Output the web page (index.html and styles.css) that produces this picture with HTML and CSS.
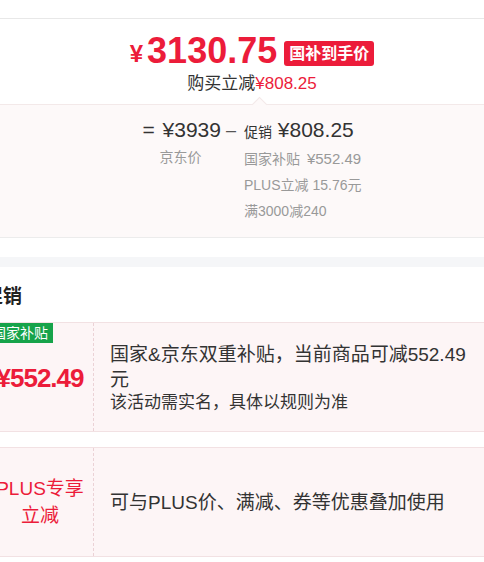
FILE: index.html
```html
<!DOCTYPE html>
<html lang="zh-CN">

<head>
    <meta charset="UTF-8" />
    <meta name="viewport" content="width=device-width, initial-scale=1" />
    <title>价格详情</title>
    <link rel="stylesheet" href="styles.css">
</head>

<body>
    <div class="page">

        <!-- 顶部分隔 -->
        <div class="top-strip"></div>

        <!-- 到手价 -->
        <div class="price-head">
            <div class="final-price">
                <span class="yen">¥</span><span class="num">3130.75</span>
                <span class="price-tag">国补到手价</span>
            </div>
            <div class="save">购买立减<span class="red">¥808.25</span></div>
        </div>

        <!-- 价格计算 -->
        <div class="calc">
            <div class="calc-inner">
                <div class="calc-col">
                    <div class="calc-line"><span class="op">=</span> ¥3939</div>
                    <div class="calc-sub jd-label">京东价</div>
                </div>
                <div class="calc-minus">–</div>
                <div class="calc-col">
                    <div class="calc-line"><span class="small">促销</span> ¥808.25</div>
                    <div class="calc-sub">国家补贴 <span class="sub-num">¥552.49</span></div>
                    <div class="calc-sub">PLUS立减 15.76元</div>
                    <div class="calc-sub">满3000减240</div>
                </div>
            </div>
        </div>

        <div class="gray-band"></div>

        <!-- 促销 -->
        <div class="promo-title">促销</div>

        <div class="promo-row">
            <div class="promo-left">
                <span class="green-tag">国家补贴</span>
                <div class="promo-amount">¥552.49</div>
            </div>
            <div class="promo-right">
                <div class="desc">国家&amp;京东双重补贴，当前商品可减552.49元</div>
                <div class="desc-sub">该活动需实名，具体以规则为准</div>
            </div>
        </div>

        <div class="promo-row">
            <div class="promo-left">
                <div class="promo-name">PLUS专享<br>立减</div>
            </div>
            <div class="promo-right">
                <div class="desc">可与PLUS价、满减、券等优惠叠加使用</div>
            </div>
        </div>

    </div>
</body>

</html>
```

FILE: styles.css
```css
body {
    margin: 0;
    background-color: #fff;
    color: #333;
    font-family: "Liberation Sans", "Noto Sans CJK SC", sans-serif;
    overflow: hidden;
}

.page {
    width: 536px;
    margin-left: -16px;
}

.top-strip {
    height: 18px;
    border-bottom: 1px solid #e8e8e8;
}

/* —— 到手价 —— */
.price-head {
    padding: 12px 0 9px;
    text-align: center;
}

.final-price {
    height: 40px;
    display: flex;
    justify-content: center;
    align-items: center;
    color: #ec1c3a;
    font-weight: bold;
}

.yen {
    font-size: 24px;
    margin-top: 6px;
    margin-right: 4px;
}

.num {
    font-size: 36px;
}

.price-tag {
    margin-left: 7px;
    margin-top: 4px;
    background-color: #ec1c3a;
    color: #fff;
    font-size: 16px;
    font-weight: bold;
    line-height: 25px;
    padding: 0 5px;
    border-radius: 3px;
}

.save {
    margin-top: 2px;
    line-height: 22px;
    font-size: 17px;
    color: #333;
}

.red {
    color: #ec1c3a;
}

/* —— 价格计算 —— */
.calc {
    position: relative;
    background-color: #fdf9f9;
    border-top: 1px solid #f3e9e9;
    border-bottom: 1px solid #ececec;
    padding: 11px 0 13px;
}

.calc::before {
    content: "";
    position: absolute;
    top: -6px;
    left: 270px;
    width: 10px;
    height: 10px;
    background-color: #fdf9f9;
    border-top: 1px solid #f3e9e9;
    border-left: 1px solid #f3e9e9;
    transform: rotate(45deg);
}

.calc-inner {
    display: flex;
    justify-content: center;
}

.calc-line {
    font-size: 21px;
    line-height: 28px;
    color: #333;
}

.op {
    margin-right: 2px;
}

.small {
    font-size: 14px;
}

.calc-minus {
    font-size: 18px;
    line-height: 28px;
    margin: 0 8px 0 5px;
    color: #555;
}

.calc-sub {
    font-size: 14px;
    line-height: 26px;
    color: #999;
}

.sub-num {
    margin-left: 3px;
    font-size: 15px;
}

.jd-label {
    padding-left: 17px;
}

.gray-band {
    height: 10px;
    margin-top: 19px;
    background-color: #f5f6f8;
}

/* —— 促销 —— */
.promo-title {
    font-size: 19px;
    font-weight: bold;
    line-height: 26px;
    padding: 17px 0 12px;
    color: #222;
}

.promo-row {
    display: flex;
    min-height: 108px;
    margin-left: 3px;
    margin-bottom: 15px;
    background-color: #fdf5f6;
    border-top: 1px solid #f2e1e3;
    border-bottom: 1px solid #f2e1e3;
}

.promo-left {
    position: relative;
    width: 106px;
    flex-shrink: 0;
    display: flex;
    align-items: center;
    justify-content: center;
    border-right: 1px dashed #ebd2d6;
    text-align: center;
    color: #ec1c3a;
}

.green-tag {
    position: absolute;
    top: 0;
    left: 0;
    background-color: #16a34a;
    color: #fff;
    font-size: 14px;
    line-height: 20px;
    padding: 0 5px;
}

.promo-amount {
    font-size: 26px;
    font-weight: bold;
    letter-spacing: -1px;
    margin-top: 3px;
}

.promo-name {
    font-size: 19px;
    line-height: 27px;
}

.promo-right {
    display: flex;
    flex-direction: column;
    justify-content: center;
    padding-left: 16px;
}

.desc {
    max-width: 372px;
    font-size: 19px;
    line-height: 25px;
    color: #333;
}

.desc-sub {
    font-size: 17px;
    line-height: 21px;
    color: #333;
}
```
